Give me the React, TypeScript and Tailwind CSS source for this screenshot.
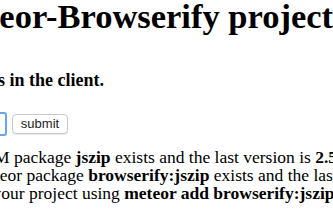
export default function App() {
  return (
    <div className="w-[333px] h-[222px] overflow-hidden bg-white text-black" style={{ fontFamily: '"Liberation Serif", "Times New Roman", serif' }}>
      <div className="-ml-[60px] w-[700px]">
        <h1 className="text-[34.5px] font-bold leading-[39px] mt-[-3px] whitespace-nowrap">Meteor-Browserify project</h1>
        <h3 className="text-[18px] font-bold leading-[22px] mt-[33px] -ml-[6px] whitespace-nowrap">Packages in the client.</h3>
        <form className="flex items-center gap-[5px] mt-[21px] ml-[-83px]" onSubmit={(e) => e.preventDefault()}>
          <input
            className="w-[150px] h-[24px] rounded-[3px] border-2 border-[#6aa4ec] bg-white outline-none"
            defaultValue=""
          />
          <button
            type="submit"
            className="h-[20px] w-[56px] rounded-[4px] border border-[#c8c8c8] bg-white text-[13px] leading-[18px] text-[#222] shadow-[0_1px_1px_rgba(0,0,0,0.08)]"
            style={{ fontFamily: '"Liberation Sans", Arial, sans-serif' }}
          >
            submit
          </button>
        </form>
        <p className="text-[17.5px] leading-[18px] mt-[12px] whitespace-nowrap">
          The NPM package <b>jszip</b> exists and the last version is <b>2.5.0</b>
          <br />
          The Meteor package <b>browserify:jszip</b> exists and the last version is <b>2.5.0_1</b>
          <br />
          Add to your project using <b>meteor add browserify:jszip</b>
        </p>
      </div>
    </div>
  );
}
